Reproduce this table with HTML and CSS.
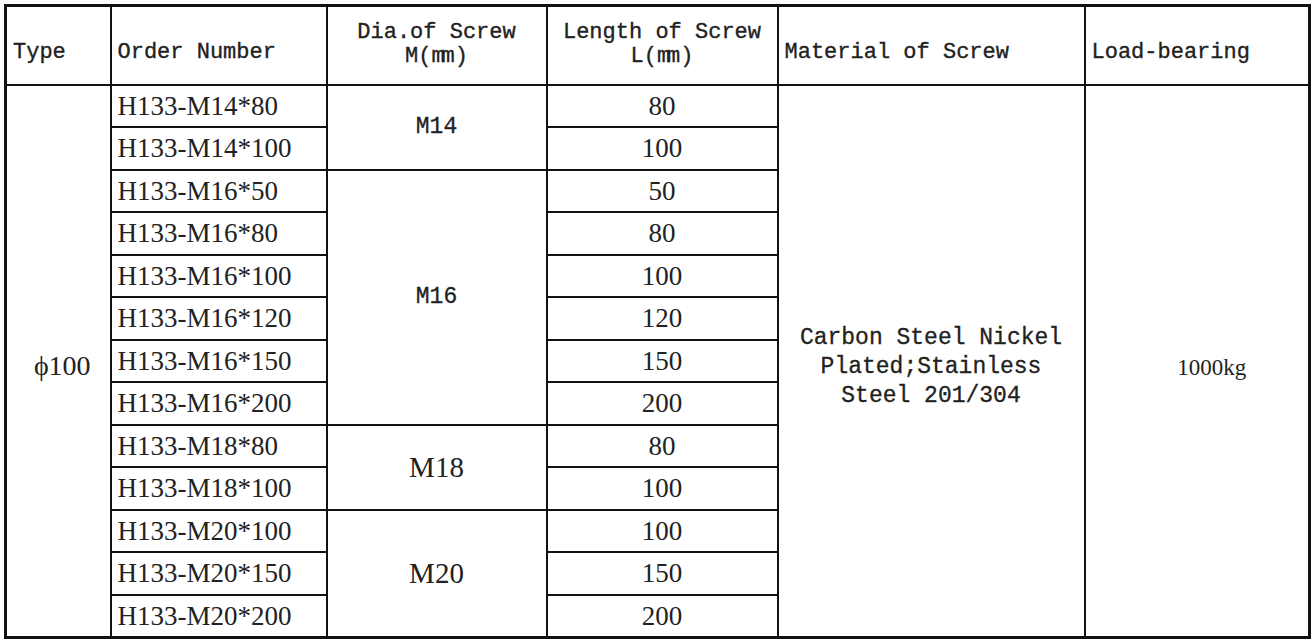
FILE: index.html
```html
<!DOCTYPE html>
<html>
<head>
<meta charset="utf-8">
<link rel="stylesheet" href="styles.css">
</head>
<body>
<table class="spec">
  <colgroup>
    <col class="c-type">
    <col class="c-order">
    <col class="c-dia">
    <col class="c-len">
    <col class="c-mat">
    <col class="c-load">
  </colgroup>
  <thead>
    <tr class="head">
      <th class="h-left h-low">Type</th>
      <th class="h-left h-low">Order Number</th>
      <th class="h-center">Dia.of Screw<br>M(<span class="mm">mm</span>)</th>
      <th class="h-center">Length of Screw<br>L(<span class="mm">mm</span>)</th>
      <th class="h-left h-low">Material of Screw</th>
      <th class="h-left h-low">Load-bearing</th>
    </tr>
  </thead>
  <tbody>
    <tr>
      <td class="type" rowspan="13">ϕ100</td>
      <td class="order">H133-M14*80</td>
      <td class="dia-mono" rowspan="2">M14</td>
      <td class="len">80</td>
      <td class="mat" rowspan="13">Carbon Steel Nickel<br>Plated;Stainless<br>Steel 201/304</td>
      <td class="load" rowspan="13">1000kg</td>
    </tr>
    <tr><td class="order">H133-M14*100</td><td class="len">100</td></tr>
    <tr>
      <td class="order">H133-M16*50</td>
      <td class="dia-mono" rowspan="6">M16</td>
      <td class="len">50</td>
    </tr>
    <tr><td class="order">H133-M16*80</td><td class="len">80</td></tr>
    <tr><td class="order">H133-M16*100</td><td class="len">100</td></tr>
    <tr><td class="order">H133-M16*120</td><td class="len">120</td></tr>
    <tr><td class="order">H133-M16*150</td><td class="len">150</td></tr>
    <tr><td class="order">H133-M16*200</td><td class="len">200</td></tr>
    <tr>
      <td class="order">H133-M18*80</td>
      <td class="dia-serif" rowspan="2">M18</td>
      <td class="len">80</td>
    </tr>
    <tr><td class="order">H133-M18*100</td><td class="len">100</td></tr>
    <tr>
      <td class="order">H133-M20*100</td>
      <td class="dia-serif" rowspan="3">M20</td>
      <td class="len">100</td>
    </tr>
    <tr><td class="order">H133-M20*150</td><td class="len">150</td></tr>
    <tr><td class="order">H133-M20*200</td><td class="len">200</td></tr>
  </tbody>
</table>
</body>
</html>
```
FILE: styles.css
```css
html, body {
  margin: 0;
  padding: 0;
  background: #ffffff;
}

body {
  color: #222222;
  font-family: "Liberation Mono", monospace;
}

.spec {
  margin: 4px 0 0 4px;
  width: 1304px;
  border-collapse: collapse;
  table-layout: fixed;
  border: 3px solid #111111;
}

.c-type { width: 105px; }
.c-order { width: 216px; }
.c-dia { width: 220px; }
.c-len { width: 231px; }
.c-mat { width: 307px; }
.c-load { width: 225px; }

.spec th,
.spec td {
  border: 2px solid #111111;
  padding: 0;
}

.spec .head {
  height: 79px;
}

.spec th {
  font-family: "Liberation Mono", monospace;
  font-weight: normal;
  font-size: 22px;
  line-height: 24px;
  vertical-align: middle;
  -webkit-text-stroke: 0.35px #222222;
}

.spec th.h-left {
  text-align: left;
  padding-left: 6px;
}

.spec th.h-low {
  padding-top: 16px;
}

.spec th.h-center {
  text-align: center;
}

.mm {
  display: inline-block;
  letter-spacing: -3px;
  padding-right: 3px;
}

.spec tbody tr {
  height: 42.5px;
}

.spec td {
  vertical-align: middle;
  line-height: 30px;
}

.spec td.type {
  font-family: "Liberation Serif", serif;
  font-size: 28px;
  text-align: center;
  padding-left: 8px;
  padding-top: 10px;
}

.spec td.order {
  font-family: "Liberation Serif", serif;
  font-size: 27px;
  text-align: left;
  padding-left: 6px;
}

.spec td.dia-mono {
  font-family: "Liberation Mono", monospace;
  font-size: 23px;
  text-align: center;
  -webkit-text-stroke: 0.3px #222222;
}

.spec td.dia-serif {
  font-family: "Liberation Serif", serif;
  font-size: 29px;
  text-align: center;
}

.spec td.len {
  font-family: "Liberation Serif", serif;
  font-size: 27px;
  text-align: center;
}

.spec td.mat {
  font-family: "Liberation Mono", monospace;
  font-size: 23px;
  line-height: 29px;
  text-align: center;
  padding-top: 14px;
  -webkit-text-stroke: 0.3px #222222;
}

.spec td.load {
  font-family: "Liberation Serif", serif;
  font-size: 23px;
  text-align: center;
  padding-left: 30px;
  padding-top: 14px;
}
```
